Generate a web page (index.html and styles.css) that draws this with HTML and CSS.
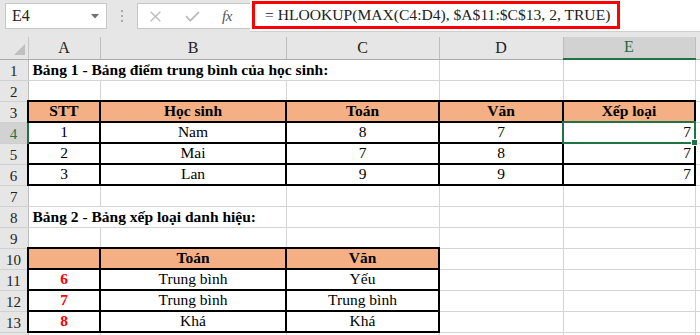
FILE: index.html
```html
<!DOCTYPE html>
<html lang="vi">
<head>
<meta charset="utf-8">
<title>HLOOKUP</title>
<link rel="stylesheet" href="styles.css">
</head>
<body>
<div class="toolbar">
  <div class="namebox">
    <span class="cellref">E4</span>
    <svg class="dd" width="8" height="5" viewBox="0 0 8 5"><path d="M0 0H8L4 4.5Z" fill="#707070"/></svg>
  </div>
  <div class="grip"><i></i><i></i><i></i></div>
  <div class="fnbox">
    <svg class="ico-x" width="11" height="11" viewBox="0 0 11 11"><path d="M0.7 0.7L10.3 10.3M10.3 0.7L0.7 10.3" stroke="#bdbdbd" stroke-width="1.4" fill="none"/></svg>
    <svg class="ico-ok" width="15" height="11" viewBox="0 0 15 11"><path d="M1 5.2L5.3 9.6L14 1" stroke="#bdbdbd" stroke-width="1.8" fill="none"/></svg>
    <span class="fx">fx</span>
  </div>
  <div class="formula"><span class="fbox">= HLOOKUP(MAX(C4:D4), $A$11:$C$13, 2, TRUE)</span></div>
</div>
<div class="sheet">
<table class="grid">
  <colgroup>
    <col class="w-rh"><col class="w-a"><col class="w-b"><col class="w-c"><col class="w-d"><col class="w-e"><col class="w-f">
  </colgroup>
  <tr class="hrow">
    <th class="corner"><svg width="11" height="11" viewBox="0 0 11 11"><path d="M11 0V11H0Z" fill="#bfbfbf"/></svg></th>
    <th class="ch">A</th><th class="ch">B</th><th class="ch">C</th><th class="ch">D</th><th class="ch selc">E</th><th class="ch"></th>
  </tr>
  <tr><th class="rh">1</th><td colspan="3" class="title">Bảng 1 - Bảng điểm trung bình của học sinh:</td><td></td><td></td><td></td></tr>
  <tr><th class="rh">2</th><td></td><td></td><td></td><td></td><td></td><td></td></tr>
  <tr><th class="rh">3</th><td class="tb hd">STT</td><td class="tb hd">Học sinh</td><td class="tb hd">Toán</td><td class="tb hd">Văn</td><td class="tb hd">Xếp loại</td><td></td></tr>
  <tr><th class="rh selr">4</th><td class="tb c">1</td><td class="tb c">Nam</td><td class="tb c">8</td><td class="tb c">7</td><td class="tb r sel">7</td><td></td></tr>
  <tr><th class="rh">5</th><td class="tb c">2</td><td class="tb c">Mai</td><td class="tb c">7</td><td class="tb c">8</td><td class="tb r">7</td><td></td></tr>
  <tr><th class="rh">6</th><td class="tb c">3</td><td class="tb c">Lan</td><td class="tb c">9</td><td class="tb c">9</td><td class="tb r">7</td><td></td></tr>
  <tr><th class="rh">7</th><td></td><td></td><td></td><td></td><td></td><td></td></tr>
  <tr><th class="rh">8</th><td colspan="2" class="title">Bảng 2 - Bảng xếp loại danh hiệu:</td><td></td><td></td><td></td><td></td></tr>
  <tr><th class="rh">9</th><td></td><td></td><td></td><td></td><td></td><td></td></tr>
  <tr><th class="rh">10</th><td class="tb hd"></td><td class="tb hd">Toán</td><td class="tb hd">Văn</td><td></td><td></td><td></td></tr>
  <tr><th class="rh">11</th><td class="tb c red">6</td><td class="tb c">Trung bình</td><td class="tb c">Yếu</td><td></td><td></td><td></td></tr>
  <tr><th class="rh">12</th><td class="tb c red">7</td><td class="tb c">Trung bình</td><td class="tb c">Trung bình</td><td></td><td></td><td></td></tr>
  <tr><th class="rh">13</th><td class="tb c red">8</td><td class="tb c">Khá</td><td class="tb c">Khá</td><td></td><td></td><td></td></tr>
  <tr><th class="rh"></th><td></td><td></td><td></td><td></td><td></td><td></td></tr>
</table>
</div>
</body>
</html>
```
FILE: styles.css
```css
html, body {
  margin: 0;
  padding: 0;
}
body {
  width: 700px;
  height: 335px;
  overflow: hidden;
  background: #ffffff;
  font-family: "Liberation Serif", "Times New Roman", serif;
  color: #000;
}

/* ---------- formula bar ---------- */
.toolbar {
  display: flex;
  align-items: flex-start;
  height: 37px;
  background: #e6e6e6;
  box-sizing: border-box;
}
.namebox {
  box-sizing: border-box;
  margin: 3px 0 0 5px;
  width: 102px;
  height: 26px;
  background: #fff;
  border: 1px solid #c6c6c6;
  display: flex;
  align-items: center;
  justify-content: space-between;
  padding: 0 7px 0 6px;
}
.cellref {
  font-size: 16px;
  color: #222;
  line-height: 1;
}
.dd { display: block; }
.grip {
  width: 30px;
  height: 32px;
  display: flex;
  flex-direction: column;
  align-items: center;
  justify-content: center;
  gap: 3px;
}
.grip i {
  display: block;
  width: 2px;
  height: 2px;
  background: #a8a8a8;
}
.fnbox {
  box-sizing: border-box;
  margin-top: 3px;
  width: 113px;
  height: 26px;
  background: #fff;
  border: 1px solid #c6c6c6;
  border-right: none;
  display: flex;
  align-items: center;
  padding-left: 12px;
}
.ico-x { margin-top: 1px; }
.ico-ok { margin-left: 24px; margin-top: 1px; }
.fx {
  margin-left: 22px;
  font-style: italic;
  font-size: 15px;
  color: #555;
  letter-spacing: -0.5px;
}
.formula {
  flex: 1;
  height: 32px;
  background: #fff;
  border-bottom: 1px solid #d0d0d0;
  box-sizing: border-box;
  padding: 1px 0 0 2px;
}
.fbox {
  display: inline-block;
  box-sizing: border-box;
  width: 368px;
  height: 28px;
  border: 3px solid #ff0000;
  padding-left: 10px;
  font-size: 15.6px;
  line-height: 22px;
  color: #222;
  white-space: nowrap;
}

/* ---------- sheet ---------- */
.sheet {
  width: 700px;
  overflow: hidden;
}
.grid {
  border-collapse: collapse;
  table-layout: fixed;
  width: 795px;
  font-size: 15.5px;
}
.w-rh { width: 28px; }
.w-a { width: 72px; }
.w-b { width: 186px; }
.w-c { width: 153px; }
.w-d { width: 124px; }
.w-e { width: 132px; }
.w-f { width: 100px; }

.grid tr { height: 21px; }
.grid tr.hrow { height: 22px; }

.grid td {
  border: 1px solid #d4d4d4;
  padding: 0 3px 1px;
  line-height: 18px;
  vertical-align: bottom;
  white-space: nowrap;
  overflow: visible;
}

.grid th {
  background: #e6e6e6;
  font-weight: normal;
  color: #222;
  padding: 0;
}
.corner {
  border-right: 1px solid #c6c6c6;
  border-bottom: 1px solid #ababab;
  text-align: right;
  vertical-align: bottom;
}
.corner svg {
  display: block;
  margin: 0 3px 4px auto;
}
.ch {
  font-size: 16px;
  line-height: 18px;
  vertical-align: bottom;
  padding-bottom: 2px !important;
  border-right: 1px solid #bdbdbd;
  border-bottom: 1px solid #ababab;
}
.ch.selc {
  background: #d2d2d2 !important;
  color: #1e6b3f !important;
  border-bottom: 2px solid #217346;
}
.rh {
  font-size: 15px;
  line-height: 18px;
  vertical-align: bottom;
  border-right: 1px solid #bdbdbd;
  border-bottom: 1px solid #d0d0d0;
}
.rh.selr {
  background: #d2d2d2 !important;
  color: #217346 !important;
  border-right: 2px solid #217346;
}

.title {
  font-weight: bold;
  padding-left: 4px !important;
}
.grid td.tb {
  border: 2px solid #000;
}
.hd {
  background: #f4b084;
  font-weight: bold;
  text-align: center;
}
.c { text-align: center; }
.r { text-align: right; }
.red {
  color: #ff0000;
  font-weight: bold;
}
.sel {
  position: relative;
  outline: 2px solid #217346;
  outline-offset: -1px;
}
.sel::after {
  content: "";
  position: absolute;
  right: -4px;
  bottom: -4px;
  width: 5px;
  height: 5px;
  background: #217346;
  border: 1px solid #fff;
}
```
